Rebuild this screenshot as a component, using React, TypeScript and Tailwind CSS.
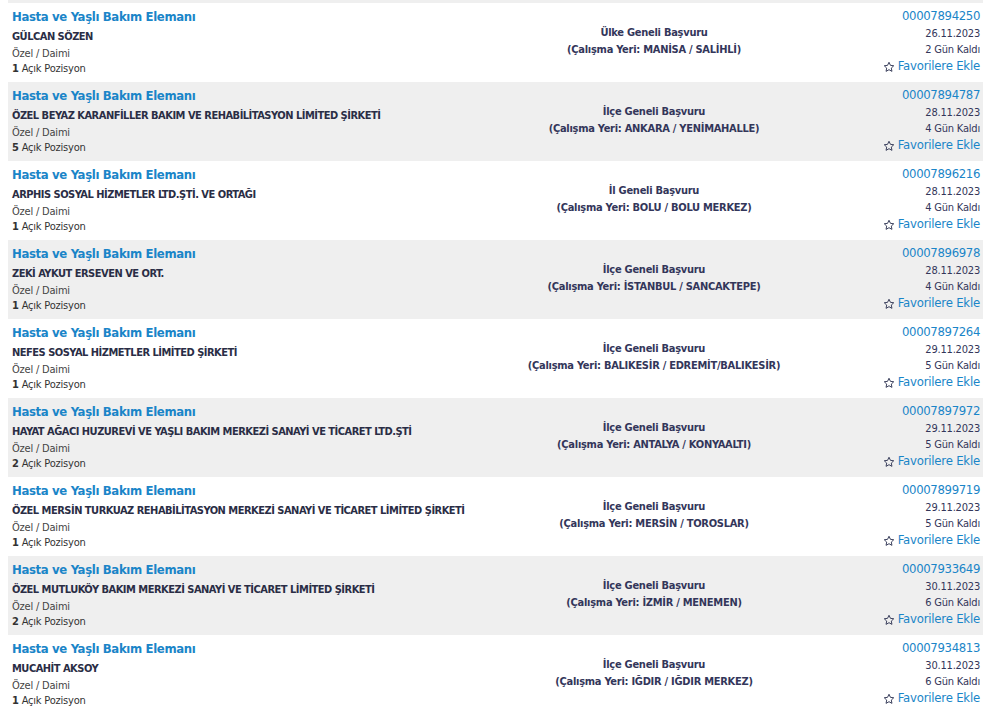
import React from "react";

type Row = {
  company: string;
  scope: string;
  place: string;
  no: string;
  date: string;
  days: string;
  positions: number;
};

const rows: Row[] = [
  { company: "GÜLCAN SÖZEN", scope: "Ülke Geneli Başvuru", place: "MANİSA / SALİHLİ", no: "00007894250", date: "26.11.2023", days: "2 Gün Kaldı", positions: 1 },
  { company: "ÖZEL BEYAZ KARANFİLLER BAKIM VE REHABİLİTASYON LİMİTED ŞİRKETİ", scope: "İlçe Geneli Başvuru", place: "ANKARA / YENİMAHALLE", no: "00007894787", date: "28.11.2023", days: "4 Gün Kaldı", positions: 5 },
  { company: "ARPHIS SOSYAL HİZMETLER LTD.ŞTİ. VE ORTAĞI", scope: "İl Geneli Başvuru", place: "BOLU / BOLU MERKEZ", no: "00007896216", date: "28.11.2023", days: "4 Gün Kaldı", positions: 1 },
  { company: "ZEKİ AYKUT ERSEVEN VE ORT.", scope: "İlçe Geneli Başvuru", place: "İSTANBUL / SANCAKTEPE", no: "00007896978", date: "28.11.2023", days: "4 Gün Kaldı", positions: 1 },
  { company: "NEFES SOSYAL HİZMETLER LİMİTED ŞİRKETİ", scope: "İlçe Geneli Başvuru", place: "BALIKESİR / EDREMİT/BALIKESİR", no: "00007897264", date: "29.11.2023", days: "5 Gün Kaldı", positions: 1 },
  { company: "HAYAT AĞACI HUZUREVİ VE YAŞLI BAKIM MERKEZİ SANAYİ VE TİCARET LTD.ŞTİ", scope: "İlçe Geneli Başvuru", place: "ANTALYA / KONYAALTI", no: "00007897972", date: "29.11.2023", days: "5 Gün Kaldı", positions: 2 },
  { company: "ÖZEL MERSİN TURKUAZ REHABİLİTASYON MERKEZİ SANAYİ VE TİCARET LİMİTED ŞİRKETİ", scope: "İlçe Geneli Başvuru", place: "MERSİN / TOROSLAR", no: "00007899719", date: "29.11.2023", days: "5 Gün Kaldı", positions: 1 },
  { company: "ÖZEL MUTLUKÖY BAKIM MERKEZİ SANAYİ VE TİCARET LİMİTED ŞİRKETİ", scope: "İlçe Geneli Başvuru", place: "İZMİR / MENEMEN", no: "00007933649", date: "30.11.2023", days: "6 Gün Kaldı", positions: 2 },
  { company: "MUCAHİT AKSOY", scope: "İlçe Geneli Başvuru", place: "IĞDIR / IĞDIR MERKEZ", no: "00007934813", date: "30.11.2023", days: "6 Gün Kaldı", positions: 1 },
];

function StarIcon() {
  return (
    <svg width="12" height="12" viewBox="0 0 24 24" fill="none" stroke="#3a3f5c" strokeWidth="2" strokeLinejoin="round" className="mr-[3px] mt-[1px]">
      <path d="M12 2.5l2.9 6.2 6.6.8-4.9 4.6 1.3 6.6L12 17.4l-5.9 3.3 1.3-6.6-4.9-4.6 6.6-.8z" />
    </svg>
  );
}

export default function App() {
  return (
    <div
      className="min-h-[717px] w-[986px] bg-white text-[#333]"
      style={{ fontFamily: '"DejaVu Sans Condensed", "DejaVu Sans", sans-serif' }}
    >
      <div className="ml-[8px] mr-[3px]">
        <div className="h-[3px] bg-[#efefef]" />
        {rows.map((r, i) => (
          <div
            key={r.no}
            className={`grid h-[79px] grid-cols-[422px_448px_105px] ${i % 2 === 1 ? "bg-[#efefef]" : "bg-white"}`}
          >
            <div className="pl-[4px] pt-[2px]">
              <div className="text-[13px] leading-[23px] font-bold tracking-[-0.35px] text-[#1a85c8] whitespace-nowrap">Hasta ve Yaşlı Bakım Elemanı</div>
              <div className="text-[11px] leading-[17px] font-bold tracking-[-0.5px] text-[#2a2d45] whitespace-nowrap">{r.company}</div>
              <div className="text-[11px] leading-[17px] tracking-[-0.2px] text-[#444]">Özel / Daimi</div>
              <div className="text-[11px] leading-[14px] tracking-[-0.2px] text-[#333]">
                <span className="font-bold">{r.positions}</span> Açık Pozisyon
              </div>
            </div>
            <div className="pt-[21px] text-center text-[11px] leading-[17px] font-bold tracking-[-0.27px] text-[#33365a]">
              <div>{r.scope}</div>
              <div>(Çalışma Yeri: {r.place})</div>
            </div>
            <div className="pr-[3px] pt-[3px] text-right">
              <div className="text-[13px] leading-[19px] tracking-[-0.35px] text-[#1a85c8]">{r.no}</div>
              <div className="text-[11px] leading-[17px] tracking-[-0.2px] text-[#33365a]">{r.date}</div>
              <div className="text-[11px] leading-[15px] tracking-[-0.2px] text-[#33365a]">{r.days}</div>
              <div className="flex items-center justify-end text-[13px] leading-[18px] tracking-[-0.2px] text-[#1a85c8]">
                <StarIcon />
                <span>Favorilere Ekle</span>
              </div>
            </div>
          </div>
        ))}
      </div>
    </div>
  );
}
